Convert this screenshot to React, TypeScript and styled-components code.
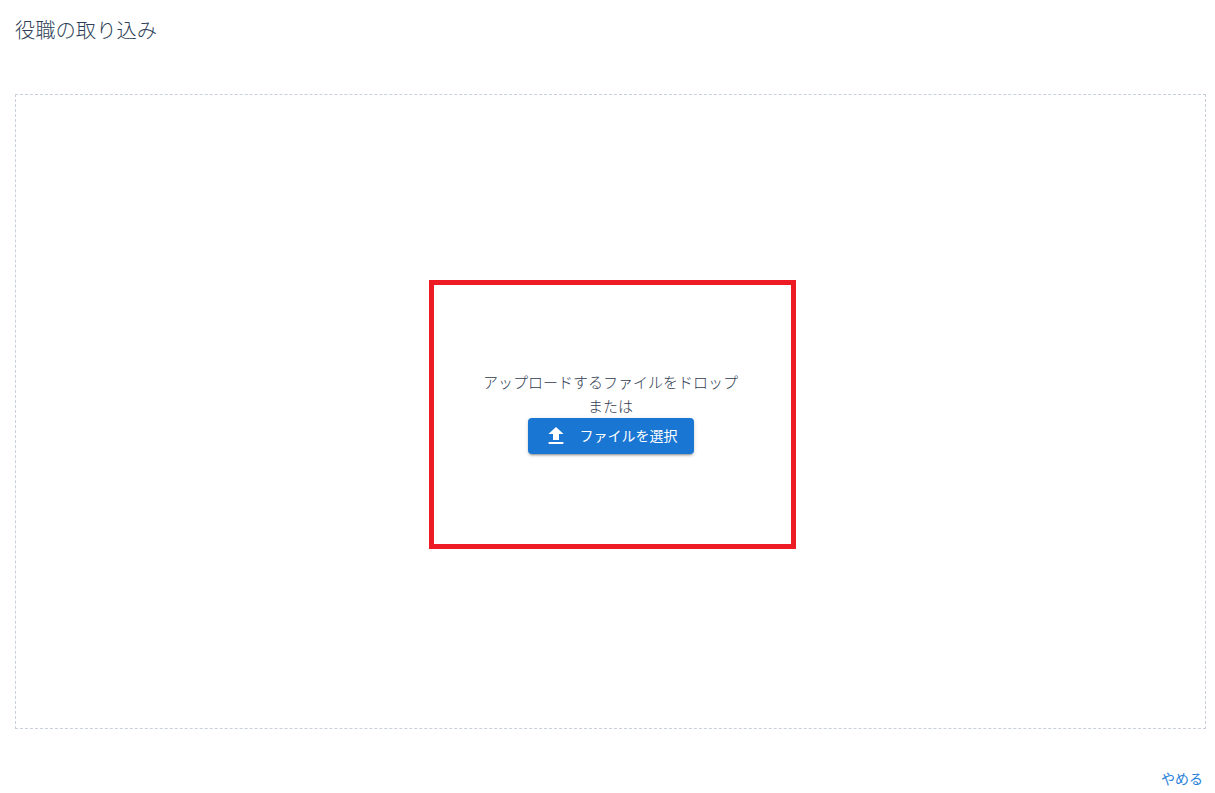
import React from 'react';
import styled, { createGlobalStyle } from 'styled-components';

const GlobalStyle = createGlobalStyle`
  html, body {
    margin: 0;
    padding: 0;
    background: #fff;
  }
  body {
    font-family: "Liberation Sans", "Noto Sans CJK JP", sans-serif;
    color: #46505f;
    overflow: hidden;
  }
`;

const Page = styled.div`
  width: 1215px;
  height: 793px;
  padding: 0 9px 0 15px;
  box-sizing: border-box;
  display: flex;
  flex-direction: column;
`;

const Title = styled.h1`
  margin: 0;
  height: 94px;
  padding-top: 19px;
  box-sizing: border-box;
  font-size: 20.3px;
  line-height: 25px;
  font-weight: 300;
  color: #2f3f58;
`;

const DropZone = styled.div`
  position: relative;
  height: 635px;
  box-sizing: border-box;
  border: 1px dashed #c9d0dc;
  display: flex;
  flex-direction: column;
  align-items: center;
  justify-content: center;
`;

const Message = styled.p`
  margin: 0 0 -1px;
  padding-top: 1px;
  font-size: 15px;
  line-height: 24px;
  font-weight: 300;
  text-align: center;
  color: #2f3c50;
`;

const UploadButton = styled.button`
  height: 36px;
  width: 166px;
  padding: 0 16px;
  display: flex;
  align-items: center;
  gap: 12px;
  border: 0;
  border-radius: 4px;
  background: #1976d2;
  color: #fff;
  font-family: inherit;
  font-size: 14px;
  white-space: nowrap;
  box-shadow: 0 3px 1px -2px rgba(0, 0, 0, 0.2), 0 2px 2px 0 rgba(0, 0, 0, 0.14), 0 1px 5px 0 rgba(0, 0, 0, 0.12);
`;

const ButtonLabel = styled.span`
  padding-bottom: 2px;
`;

const Highlight = styled.div`
  position: absolute;
  left: 413px;
  top: 185px;
  width: 367px;
  height: 269px;
  box-sizing: border-box;
  border: 5px solid #ed1c24;
  pointer-events: none;
`;

const Footer = styled.div`
  display: flex;
  justify-content: flex-end;
  padding: 40px 3px 0 0;
`;

const CancelLink = styled.a`
  font-size: 14px;
  line-height: 20px;
  font-weight: 400;
  color: #2b82d9;
`;

const UploadIcon = () => (
  <svg width="24" height="24" viewBox="0 0 24 24" fill="currentColor" aria-hidden="true">
    <path d="M9 16h6v-6h4.6L12 3 4.4 10H9zM4.6 18h14.8v2H4.6z" />
  </svg>
);

const App = () => {
  return (
    <Page>
      <GlobalStyle />
      <Title>役職の取り込み</Title>
      <DropZone>
        <Message>アップロードするファイルをドロップ</Message>
        <Message>または</Message>
        <UploadButton>
          <UploadIcon />
          <ButtonLabel>ファイルを選択</ButtonLabel>
        </UploadButton>
        <Highlight />
      </DropZone>
      <Footer>
        <CancelLink>やめる</CancelLink>
      </Footer>
    </Page>
  );
};

export default App;
